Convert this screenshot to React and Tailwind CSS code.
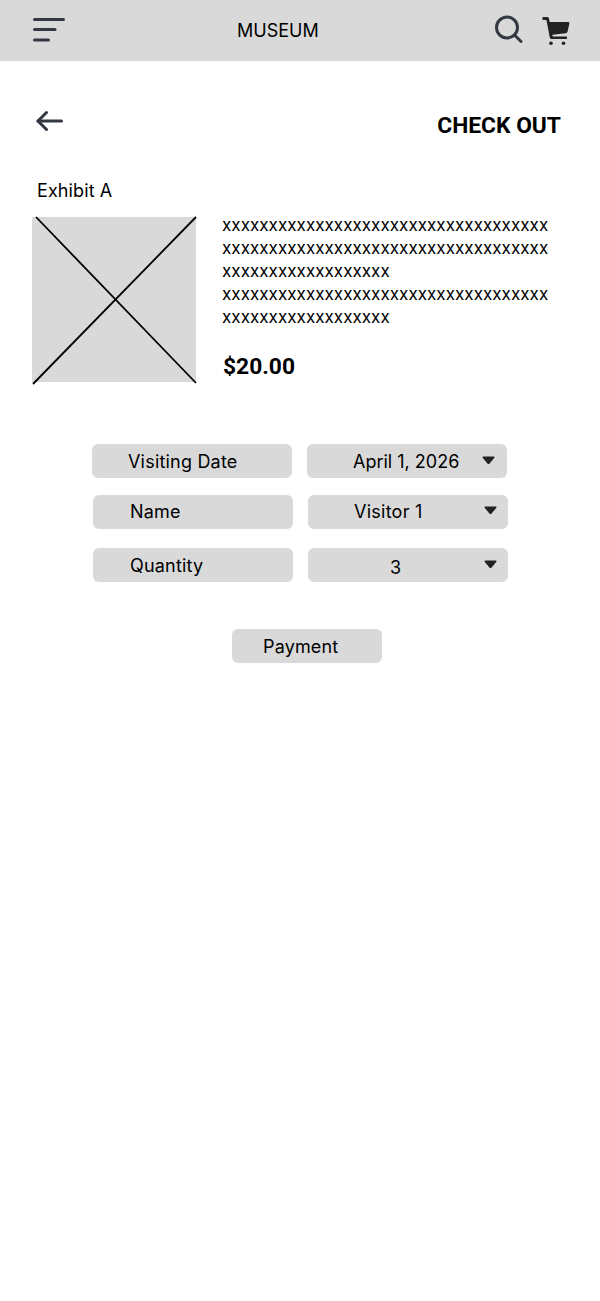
const FIELDS = [
  { label: 'Visiting Date', value: 'April 1, 2026', rowClass: 'ml-[92px] mt-[62px]', labelClass: 'pl-[36px] tracking-[0.2px]', valueClass: 'pl-[46px]', caretClass: 'left-[175px] top-[12px]' },
  { label: 'Name', value: 'Visitor 1', rowClass: 'ml-[93px] mt-[17px]', labelClass: 'pl-[37px] pb-[2px] tracking-[0.2px]', valueClass: 'pl-[46px] pb-[2px] tracking-[0.25px]', caretClass: 'left-[176px] top-[11px]' },
  { label: 'Quantity', value: '3', rowClass: 'ml-[93px] mt-[19px]', labelClass: 'pl-[37px] tracking-[0.2px]', valueClass: 'pl-[82px] pt-[4px]', caretClass: 'left-[176px] top-[12px]' },
];

function MenuIcon() {
  return (
    <svg width="34" height="26" viewBox="0 0 34 26" fill="none" stroke="#333842" strokeWidth="3" strokeLinecap="round">
      <path d="M2.5 2.5H31.5" />
      <path d="M2.5 12.5H23" />
      <path d="M2.5 23H16.5" />
    </svg>
  );
}

function SearchIcon() {
  return (
    <svg width="30" height="30" viewBox="0 0 30 30" fill="none" stroke="#333842" strokeWidth="3" strokeLinecap="round">
      <circle cx="14" cy="13.5" r="10.5" />
      <path d="M22 21.5L28 27.5" />
    </svg>
  );
}

function CartIcon() {
  return (
    <svg width="28" height="30" viewBox="0 0 28 30" fill="#222222">
      <path d="M0.5 1H5C6 1 6.8 1.6 7 2.6L7.6 6H26.2C27 6 27.6 6.7 27.4 7.5L25.6 15.6C25.4 16.5 24.7 17 23.9 17.2L10.4 18.8L10.6 20.4H25V23H9.6C8.7 23 8 22.4 7.8 21.5L4.4 4H0.5Z" />
      <circle cx="9" cy="27.2" r="1.8" />
      <circle cx="21.5" cy="27.2" r="1.8" />
    </svg>
  );
}

function BackArrow() {
  return (
    <svg width="28" height="22" viewBox="0 0 28 22" fill="none" stroke="#333842" strokeWidth="3" strokeLinecap="round" strokeLinejoin="round">
      <path d="M25.5 11H2" />
      <path d="M10.5 2.5L2 11L10.5 19.5" />
    </svg>
  );
}

function Caret() {
  return (
    <svg width="13" height="9" viewBox="0 0 14 10" fill="#222222">
      <path d="M1.2 0.5H12.8C13.6 0.5 14 1.4 13.5 2L8 8.6C7.5 9.2 6.5 9.2 6 8.6L0.5 2C0 1.4 0.4 0.5 1.2 0.5Z" />
    </svg>
  );
}

export default function App() {
  const filler = 'x'.repeat(35);
  const fillerShort = 'x'.repeat(18);

  return (
    <div className="min-h-[1301px] bg-white text-black font-['Inter',sans-serif]">
      <header className="h-[61px] bg-[#d9d9d9] flex items-center relative">
        <div className="ml-[32px] mt-[-1px]"><MenuIcon /></div>
        <span className="ml-[171px] text-[18px] leading-[22px]">MUSEUM</span>
        <div className="ml-auto mr-[77px] mt-[-3px]"><SearchIcon /></div>
        <div className="absolute left-[542px] top-[16px]"><CartIcon /></div>
      </header>

      <div className="flex justify-between pt-[49px] pl-[36px] pr-[39px]">
        <BackArrow />
        <h1 className="font-['Roboto',sans-serif] font-bold text-[22.8px] leading-[27px] mt-[2px]">CHECK OUT</h1>
      </div>

      <p className="ml-[37px] mt-[41px] text-[18px] leading-[22px] tracking-[0.1px]">Exhibit A</p>

      <section className="flex mt-[15px] ml-[32px]">
        <div className="relative w-[164px] h-[165px] bg-[#d9d9d9] shrink-0">
          <svg className="absolute left-0 top-0 overflow-visible" width="164" height="165" viewBox="0 0 164 165" fill="none" stroke="#000000" strokeWidth="1.8">
            <path d="M4 0L164 166" />
            <path d="M164 0L1 167" />
          </svg>
        </div>
        <div className="ml-[26px]">
          <div className="text-[17px] leading-[23px] mt-[-3.5px] tracking-[0.04px]">
            <div>{filler}</div>
            <div>{filler}</div>
            <div>{fillerShort}</div>
            <div>{filler}</div>
            <div>{fillerShort}</div>
          </div>
          <p className="font-['Roboto',sans-serif] font-bold text-[22.8px] leading-[26px] mt-[25.5px] ml-[1px]">$20.00</p>
        </div>
      </section>

      {FIELDS.map((field) => (
        <div key={field.label} className={`flex gap-[15px] ${field.rowClass}`}>
          <div className={`w-[200px] h-[34px] rounded-[6px] bg-[#d9d9d9] flex items-center text-[18px] ${field.labelClass}`}>
            {field.label}
          </div>
          <div className={`relative w-[200px] h-[34px] rounded-[6px] bg-[#d9d9d9] flex items-center text-[18px] ${field.valueClass}`}>
            {field.value}
            <div className={`absolute flex ${field.caretClass}`}><Caret /></div>
          </div>
        </div>
      ))}

      <div className="ml-[232px] mt-[47px] w-[150px] h-[34px] rounded-[6px] bg-[#d9d9d9] flex items-center pl-[31px] text-[18px] tracking-[0.15px]">
        Payment
      </div>
    </div>
  );
}
